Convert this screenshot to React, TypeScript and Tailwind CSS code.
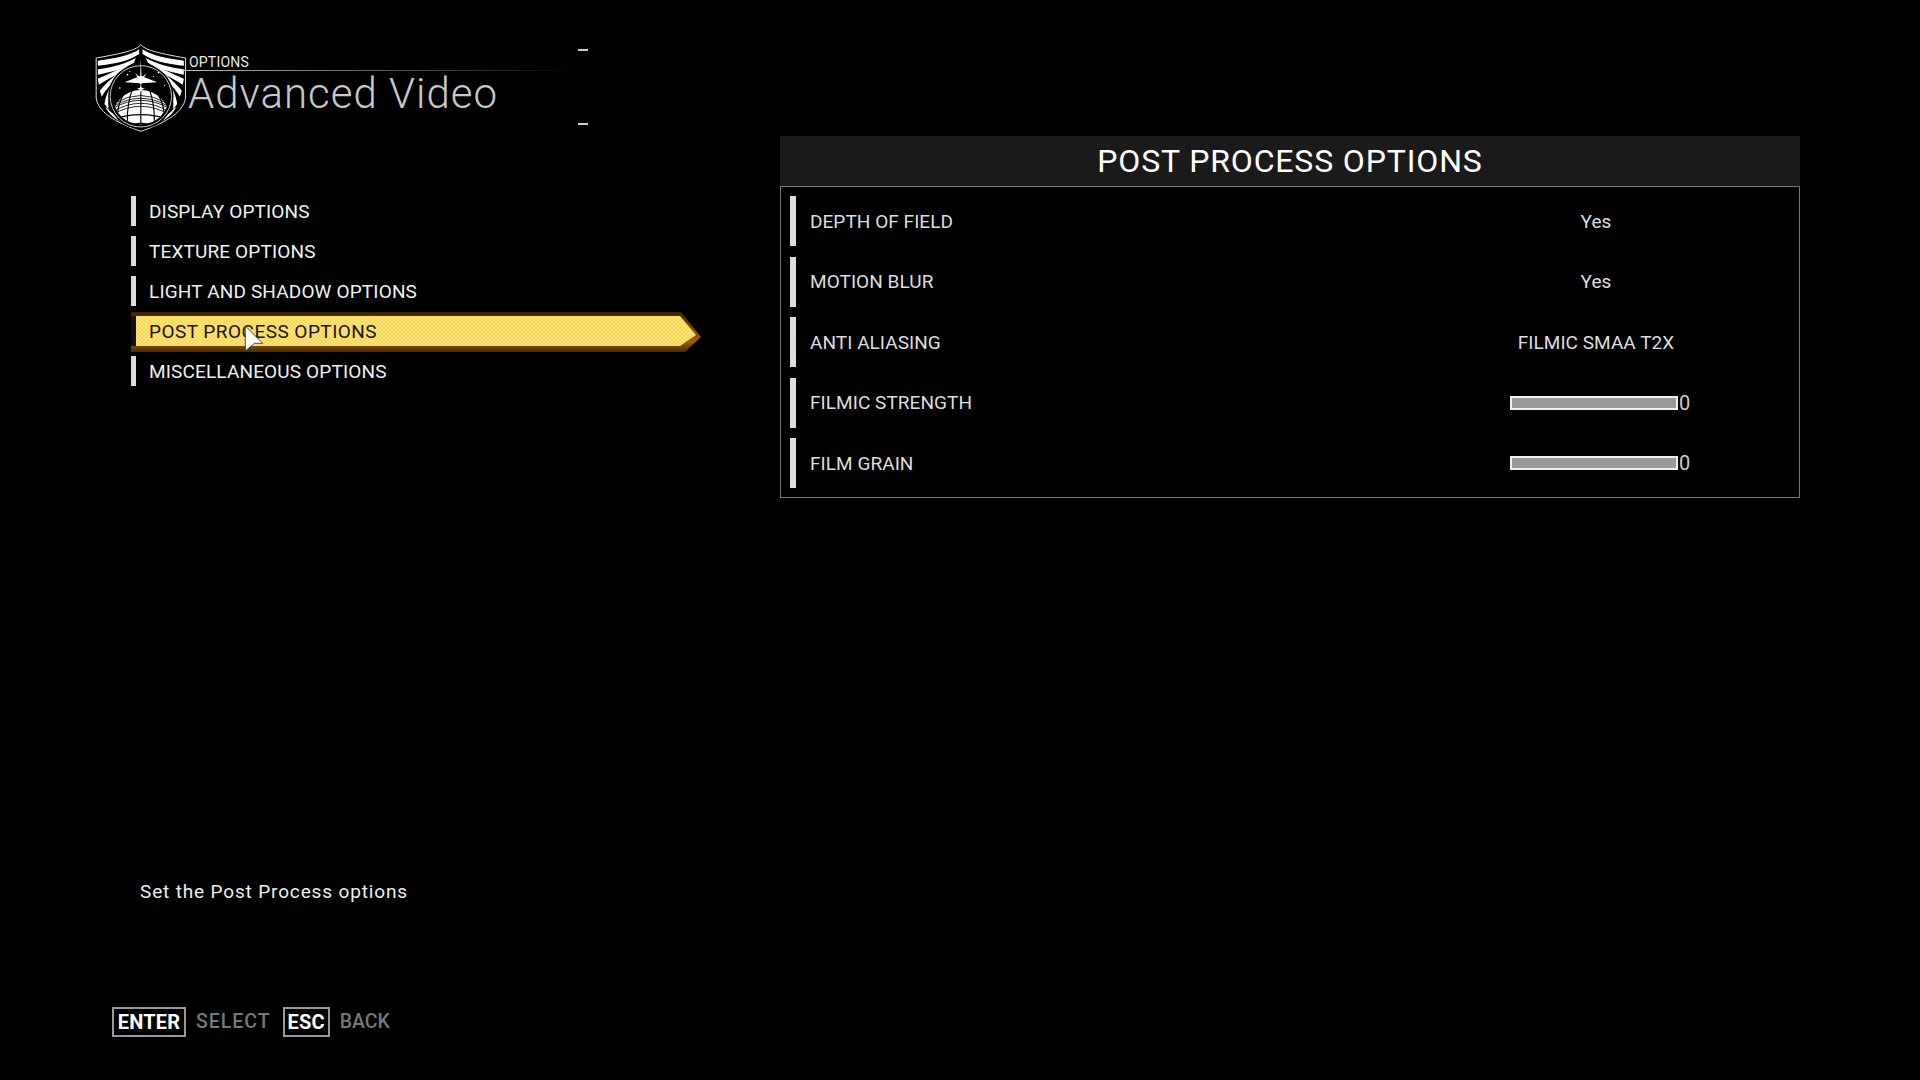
const FONT = "font-['Roboto',sans-serif]";

const menuItems = [
  'DISPLAY OPTIONS',
  'TEXTURE OPTIONS',
  'LIGHT AND SHADOW OPTIONS',
  'POST PROCESS OPTIONS',
  'MISCELLANEOUS OPTIONS',
];

const rows = [
  { label: 'DEPTH OF FIELD', value: 'Yes' },
  { label: 'MOTION BLUR', value: 'Yes' },
  { label: 'ANTI ALIASING', value: 'FILMIC SMAA T2X' },
  { label: 'FILMIC STRENGTH', slider: true },
  { label: 'FILM GRAIN', slider: true },
];

const Wing = () => (
  <g fill="#fff">
    <path d="M162 44C135 62 90 72 38 78L38 93C92 88 132 78 162 58Z" />
    <path d="M152 70C122 86 85 98 38 104L38 120C85 111 120 100 146 84Z" />
    <path d="M128 93C100 103 70 118 38 132L41 150C70 132 94 120 114 110Z" />
    <path d="M100 116C78 130 58 152 44 168L50 186C64 163 78 148 90 137Z" />
    <path d="M80 148C68 168 60 190 58 208L70 224C68 200 71 182 76 170Z" />
    <path d="M60 216C72 238 90 256 126 270L102 248C88 242 76 232 68 222Z" />
  </g>
);

const Logo = () => (
  <svg viewBox="30 25 275 270" className="w-[92px] h-[90px] shrink-0">
    <defs>
      <clipPath id="disc">
        <circle cx="167" cy="185" r="84" />
      </clipPath>
    </defs>
    <path
      d="M167 30C155 45 120 55 33 70L33 190C40 240 110 270 167 290C224 270 294 240 301 190L301 70C214 55 179 45 167 30Z"
      fill="none"
      stroke="#ddd"
      strokeWidth="3"
    />
    <Wing />
    <g transform="translate(334 0) scale(-1 1)">
      <Wing />
    </g>
    <circle cx="167" cy="185" r="98" fill="#000" />
    <circle cx="167" cy="185" r="92" fill="none" stroke="#eee" strokeWidth="2.5" />
    <g clipPath="url(#disc)">
      <circle cx="167" cy="252" r="86" fill="#fff" />
      <g fill="none" stroke="#000" strokeWidth="2.5">
        <path d="M81 240Q167 190 253 240M81 222Q167 172 253 222M90 205Q167 160 244 205M84 230Q167 182 250 230M86 214Q167 168 248 214" />
        <path d="M70 258Q167 222 264 258M70 282Q167 250 264 282" strokeWidth="4" />
        <path d="M167 165V290M140 168Q122 220 128 290M194 168Q212 220 206 290M115 180Q90 220 98 285M219 180Q244 220 236 285" strokeWidth="3.5" />
      </g>
    </g>
    <g fill="#fff">
      <path d="M167 72L169 124L216 143L170 146L167 152L164 146L118 143L165 124Z" />
      <path d="M150 116L167 130L184 116L172 136L162 136Z" />
      <circle cx="167" cy="132" r="5" />
      <path d="M167 150L170 159L179 162L170 165L167 174L164 165L155 162L164 159Z" />
      <circle cx="127" cy="120" r="2.5" />
      <circle cx="134" cy="110" r="2" />
      <circle cx="220" cy="114" r="2.5" />
      <circle cx="104" cy="160" r="2.5" />
      <circle cx="238" cy="152" r="2" />
      <circle cx="205" cy="125" r="2" />
    </g>
  </svg>
);

const ActiveBar = () => (
  <svg viewBox="0 0 576 46" className="absolute left-0 top-[-5px] w-[576px] h-[46px]">
    <defs>
      <pattern id="dots" width="4" height="4" patternUnits="userSpaceOnUse">
        <rect width="4" height="4" fill="#ffe676" />
        <rect width="2" height="2" fill="#f6d55e" />
        <rect x="2" y="2" width="2" height="2" fill="#f6d55e" />
      </pattern>
      <linearGradient id="under" x1="0" y1="0" x2="0" y2="1">
        <stop offset="0" stopColor="#3a2002" />
        <stop offset="0.16" stopColor="#5c3406" />
        <stop offset="0.75" stopColor="#9c5c10" />
        <stop offset="1" stopColor="#4a2a04" />
      </linearGradient>
    </defs>
    <path d="M0 1H550L570 26L554 41H0Z" fill="url(#under)" />
    <path d="M5 5H549L565 24L549 35H5Z" fill="url(#dots)" />
    <rect x="0" y="5" width="5" height="30" fill="#14100a" />
  </svg>
);

const Cursor = () => (
  <svg viewBox="0 0 20 28" className="absolute left-[113px] top-[9px] w-[20px] h-[27px]">
    <path d="M1 1L19 19H10.5L1 27Z" fill="#fff" stroke="#222" strokeWidth="0.8" />
  </svg>
);

const KeyHint = ({ keyName, label, boxClass }: { keyName: string; label: string; boxClass: string }) => (
  <div className="flex items-center gap-[10px]">
    <span className={`border-2 border-[#999] h-[30px] ${boxClass} flex items-center justify-center text-[20px] font-bold tracking-[0.2px] text-white`}>
      {keyName}
    </span>
    <span className={`text-[19.5px] font-medium text-[#777] ${label === 'BACK' ? 'tracking-[0px]' : 'tracking-[1px]'}`}>{label}</span>
  </div>
);

export default function App() {
  return (
    <div className={`w-[1920px] h-[1080px] bg-black flex overflow-hidden text-white ${FONT}`}>
      <div className="w-[780px] shrink-0 flex flex-col">
        <header className="flex ml-[95px] mt-[43px] h-[90px]">
          <Logo />
          <div className="w-[395px] -ml-[5px] pt-[11px]">
            <div className="text-[14px] leading-[16px] tracking-[0.2px] text-[#e8e8e8] pl-[7px]">OPTIONS</div>
            <div className="h-px bg-gradient-to-r from-[#bbb] to-transparent" />
            <div className="text-[42px] leading-[46px] font-light tracking-[1px] text-[#c8c8c8] pl-[6px]">
              Advanced Video
            </div>
          </div>
          <div className="w-[10px] h-[76px] mt-[6px] ml-[1px] flex flex-col justify-between">
            <div className="h-[2px] bg-[#ccc]" />
            <div className="h-[2px] bg-[#ccc]" />
          </div>
        </header>

        <nav className="ml-[131px] mt-[63px] flex flex-col gap-[10px]">
          {menuItems.map((item) => {
            const active = item === 'POST PROCESS OPTIONS';
            return (
              <div key={item} className="relative h-[30px] flex items-center">
                {active ? <ActiveBar /> : <div className="w-[5px] h-[30px] bg-[#ddd]" />}
                <span
                  className={`relative pt-[3px] text-[19px] ${active ? 'ml-[18px] tracking-[0.47px] text-[#1a1405]' : 'ml-[13px] tracking-[0.15px] text-[#f0f0f0]'}`}
                >
                  {item}
                </span>
                {active && <Cursor />}
              </div>
            );
          })}
        </nav>

        <p className="ml-[140px] mt-[494px] text-[19px] leading-[24px] tracking-[0.85px] text-[#eee]">
          Set the Post Process options
        </p>

        <div className="ml-[112px] mt-[103px] flex gap-[12px]">
          <KeyHint keyName="ENTER" label="SELECT" boxClass="w-[74px]" />
          <KeyHint keyName="ESC" label="BACK" boxClass="w-[47px]" />
        </div>
      </div>

      <main className="w-[1020px] mt-[136px]">
        <h1 className="h-[50px] bg-[#1a1a1a] flex items-center justify-center text-[32px] tracking-[0.85px] text-white">
          POST PROCESS OPTIONS
        </h1>
        <div className="border border-[#777] px-[9px] py-[9px] flex flex-col gap-[10.5px]">
          {rows.map((row) => (
            <div key={row.label} className="h-[50px] flex items-center">
              <div className="w-[6px] h-[50px] bg-[#ddd]" />
              <span className="ml-[14px] pt-[2px] flex-1 text-[19px] tracking-[0.05px] text-[#ddd]">{row.label}</span>
              <div className="w-[208px] mr-[90px] flex items-center justify-center">
                {row.slider ? (
                  <div className="w-full pl-[18px] flex items-center gap-[1px]">
                    <div className="w-[168px] h-[14px] border-2 border-[#eee] bg-[#999]" />
                    <span className="text-[20px] text-[#ccc]">0</span>
                  </div>
                ) : (
                  <span className="pt-[2px] text-[19px] tracking-[0.05px] text-[#ddd]">{row.value}</span>
                )}
              </div>
            </div>
          ))}
        </div>
      </main>
    </div>
  );
}
